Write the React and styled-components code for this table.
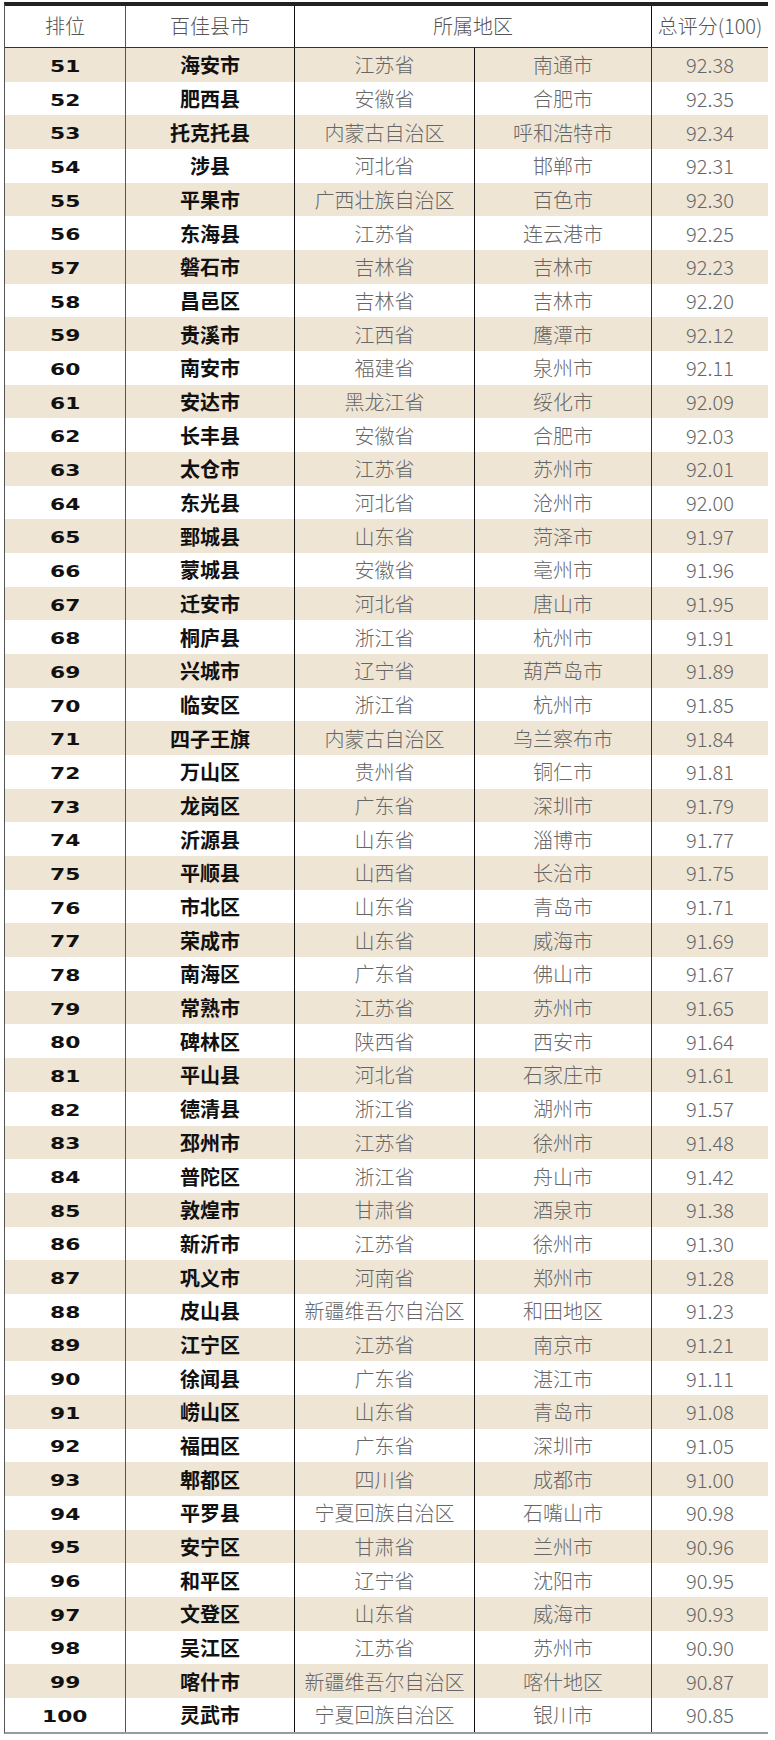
import styled, { createGlobalStyle } from "styled-components";

const rows = [
  [51, "海安市", "江苏省", "南通市", "92.38"],
  [52, "肥西县", "安徽省", "合肥市", "92.35"],
  [53, "托克托县", "内蒙古自治区", "呼和浩特市", "92.34"],
  [54, "涉县", "河北省", "邯郸市", "92.31"],
  [55, "平果市", "广西壮族自治区", "百色市", "92.30"],
  [56, "东海县", "江苏省", "连云港市", "92.25"],
  [57, "磐石市", "吉林省", "吉林市", "92.23"],
  [58, "昌邑区", "吉林省", "吉林市", "92.20"],
  [59, "贵溪市", "江西省", "鹰潭市", "92.12"],
  [60, "南安市", "福建省", "泉州市", "92.11"],
  [61, "安达市", "黑龙江省", "绥化市", "92.09"],
  [62, "长丰县", "安徽省", "合肥市", "92.03"],
  [63, "太仓市", "江苏省", "苏州市", "92.01"],
  [64, "东光县", "河北省", "沧州市", "92.00"],
  [65, "鄄城县", "山东省", "菏泽市", "91.97"],
  [66, "蒙城县", "安徽省", "亳州市", "91.96"],
  [67, "迁安市", "河北省", "唐山市", "91.95"],
  [68, "桐庐县", "浙江省", "杭州市", "91.91"],
  [69, "兴城市", "辽宁省", "葫芦岛市", "91.89"],
  [70, "临安区", "浙江省", "杭州市", "91.85"],
  [71, "四子王旗", "内蒙古自治区", "乌兰察布市", "91.84"],
  [72, "万山区", "贵州省", "铜仁市", "91.81"],
  [73, "龙岗区", "广东省", "深圳市", "91.79"],
  [74, "沂源县", "山东省", "淄博市", "91.77"],
  [75, "平顺县", "山西省", "长治市", "91.75"],
  [76, "市北区", "山东省", "青岛市", "91.71"],
  [77, "荣成市", "山东省", "威海市", "91.69"],
  [78, "南海区", "广东省", "佛山市", "91.67"],
  [79, "常熟市", "江苏省", "苏州市", "91.65"],
  [80, "碑林区", "陕西省", "西安市", "91.64"],
  [81, "平山县", "河北省", "石家庄市", "91.61"],
  [82, "德清县", "浙江省", "湖州市", "91.57"],
  [83, "邳州市", "江苏省", "徐州市", "91.48"],
  [84, "普陀区", "浙江省", "舟山市", "91.42"],
  [85, "敦煌市", "甘肃省", "酒泉市", "91.38"],
  [86, "新沂市", "江苏省", "徐州市", "91.30"],
  [87, "巩义市", "河南省", "郑州市", "91.28"],
  [88, "皮山县", "新疆维吾尔自治区", "和田地区", "91.23"],
  [89, "江宁区", "江苏省", "南京市", "91.21"],
  [90, "徐闻县", "广东省", "湛江市", "91.11"],
  [91, "崂山区", "山东省", "青岛市", "91.08"],
  [92, "福田区", "广东省", "深圳市", "91.05"],
  [93, "郫都区", "四川省", "成都市", "91.00"],
  [94, "平罗县", "宁夏回族自治区", "石嘴山市", "90.98"],
  [95, "安宁区", "甘肃省", "兰州市", "90.96"],
  [96, "和平区", "辽宁省", "沈阳市", "90.95"],
  [97, "文登区", "山东省", "威海市", "90.93"],
  [98, "吴江区", "江苏省", "苏州市", "90.90"],
  [99, "喀什市", "新疆维吾尔自治区", "喀什地区", "90.87"],
  [100, "灵武市", "宁夏回族自治区", "银川市", "90.85"],
];

const GlobalStyle = createGlobalStyle`
  body {
    margin: 0;
    background: #fff;
    font-family: "Noto Sans CJK SC", "Noto Sans", sans-serif;
  }
`;

const Page = styled.div`
  padding: 2px 0 0 4px;
  width: 764px;
`;

const Table = styled.div`
  width: 764px;
  border-top: 4px solid #222;
  border-bottom: 2px solid #9a9a9a;
  border-left: 1px solid #555;
  box-sizing: border-box;
`;

const Grid = styled.div`
  display: grid;
  grid-template-columns: 121px 169px 180px 177px 116px;
  height: ${(p) => p.$h};
  background: ${(p) => (p.$shade ? "#efe5d5" : "#fff")};
  border-bottom: ${(p) => (p.$head ? "1px solid #333" : "none")};
`;

const Cell = styled.div`
  display: flex;
  align-items: center;
  justify-content: center;
  border-right: ${(p) => (p.$line ? `1px solid ${p.$line}` : "none")};
  grid-column: ${(p) => p.$span || "auto"};
  font-size: 20px;
  color: #666;
  font-weight: 300;
  white-space: nowrap;
  overflow: hidden;
`;

const HeadCell = styled(Cell)`
  color: #555;
  padding-bottom: 2px;
`;

const Rank = styled.span`
  display: inline-block;
  margin-top: 3px;
  font-family: "DejaVu Sans", sans-serif;
  font-weight: 700;
  font-size: 16px;
  color: #111;
  transform: scaleX(1.36);
`;

const Name = styled(Cell)`
  color: #111;
  font-weight: 700;
`;

export default function App() {
  return (
    <Page>
      <GlobalStyle />
      <Table>
        <Grid $head $h="41px">
          <HeadCell $line="#555">排位</HeadCell>
          <HeadCell $line="#111">百佳县市</HeadCell>
          <HeadCell $line="#111" $span="span 2">所属地区</HeadCell>
          <HeadCell>总评分(100)</HeadCell>
        </Grid>
        {rows.map(([rank, name, prov, city, score], i) => (
          <Grid key={rank} $shade={i % 2 === 0} $h="33.68px">
            <Cell $line="#555">
              <Rank>{rank}</Rank>
            </Cell>
            <Name $line="#111">{name}</Name>
            <Cell $line="#111">{prov}</Cell>
            <Cell $line="#333">{city}</Cell>
            <Cell>{score}</Cell>
          </Grid>
        ))}
      </Table>
    </Page>
  );
}
